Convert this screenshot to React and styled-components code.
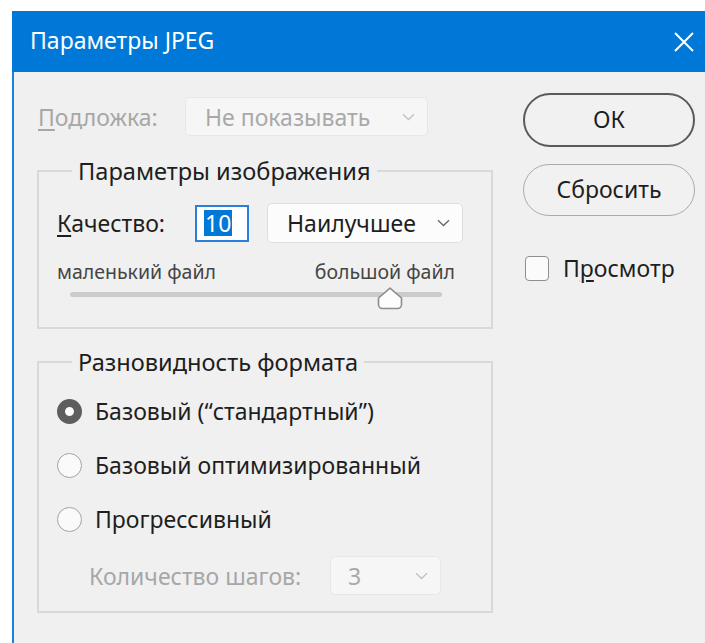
import React from "react";
import styled, { createGlobalStyle } from "styled-components";

const GlobalStyle = createGlobalStyle`
  * { box-sizing: border-box; }
  html, body {
    margin: 0;
    padding: 0;
    background: #ffffff;
  }
  body {
    font-family: "Noto Sans", "Open Sans", "DejaVu Sans", sans-serif;
    color: #1e1e1e;
  }
`;

const Page = styled.div`
  width: 705px;
  height: 643px;
  padding: 11px 0 0 12px;
  overflow: hidden;
`;

const Dialog = styled.div`
  display: flex;
  flex-direction: column;
  height: 632px;
`;

const TitleBar = styled.div`
  height: 61px;
  flex: none;
  display: flex;
  align-items: center;
  justify-content: space-between;
  padding: 0 9px 0 18px;
  background: #0078d7;
  color: #ffffff;
  font-size: 23px;
`;

const Title = styled.span`
  line-height: 1;
  padding-bottom: 2px;
`;

const CloseButton = styled.button`
  width: 24px;
  height: 24px;
  padding: 0;
  border: 0;
  background: transparent;
  display: flex;
  align-items: center;
  justify-content: center;
`;

const Body = styled.div`
  flex: 1;
  display: flex;
  gap: 30px;
  padding: 21px 10px 0 23px;
  background: #f0f0f0;
  border-left: 2px solid #1a80d9;
  font-size: 23px;
`;

const LeftColumn = styled.div`
  width: 456px;
  display: flex;
  flex-direction: column;
  padding-top: 4px;
`;

const RightColumn = styled.div`
  width: 172px;
  display: flex;
  flex-direction: column;
`;

const FieldRow = styled.div`
  display: flex;
  align-items: center;
  height: ${(p) => p.$height || 39}px;
  padding-left: ${(p) => p.$indent || 0}px;
  margin-top: ${(p) => p.$top || 0}px;
`;

const Label = styled.span`
  width: ${(p) => p.$width}px;
  flex: none;
  line-height: 30px;
  white-space: nowrap;
  color: ${(p) => (p.$disabled ? "#a7a7a7" : "#1e1e1e")};

  u {
    text-decoration-thickness: 1.5px;
    text-underline-offset: 3px;
  }
`;

const Select = styled.div`
  width: ${(p) => p.$width}px;
  height: ${(p) => p.$height || 39}px;
  flex: none;
  display: flex;
  align-items: center;
  justify-content: space-between;
  padding: 0 12px 0 ${(p) => p.$pad || 19}px;
  border: 1px solid ${(p) => (p.$disabled ? "#e7e7e7" : "#dedede")};
  border-radius: 5px;
  background: ${(p) => (p.$disabled ? "#f6f6f6" : "#fcfcfc")};
  color: ${(p) => (p.$disabled ? "#a9a9a9" : "#1e1e1e")};
  line-height: 30px;
  white-space: nowrap;
`;

const Group = styled.fieldset`
  margin: ${(p) => p.$top}px 0 0;
  padding: 17px 26px ${(p) => p.$bottom}px 18px;
  border: 2px solid #d9d9d9;
  min-width: 0;
`;

const Legend = styled.legend`
  margin-left: 15px;
  padding: 0 6px;
  font-size: 23.6px;
  line-height: 30px;
  color: #1e1e1e;
`;

const QualityInput = styled.div`
  width: 54px;
  height: 37px;
  flex: none;
  display: flex;
  align-items: center;
  padding-left: 7px;
  margin-right: 18px;
  border: 2px solid #2a7fdd;
  background: #ffffff;
`;

const Selection = styled.span`
  background: #0078d7;
  color: #ffffff;
  line-height: 26px;
  padding: 0 1px;
`;

const Scale = styled.div`
  width: 398px;
  margin-top: 17px;
`;

const ScaleLabels = styled.div`
  display: flex;
  justify-content: space-between;
  font-size: 19.5px;
  line-height: 24px;
  color: #454545;
`;

const SliderArea = styled.div`
  position: relative;
  height: 24px;
  margin: 1px 13px 0;
`;

const Track = styled.div`
  position: relative;
  top: 7px;
  height: 5px;
  border-radius: 3px;
  background: #cbcbcb;
`;

const Thumb = styled.svg`
  position: absolute;
  top: 2px;
  transform: translateX(-50%);
`;

const RadioList = styled.div`
  display: flex;
  flex-direction: column;
  gap: 20px;
`;

const RadioRow = styled.label`
  display: flex;
  align-items: center;
  gap: 13px;
  height: 34px;
  line-height: 30px;
  color: #1e1e1e;
`;

const RadioDot = styled.span`
  width: 25px;
  height: 25px;
  flex: none;
  border-radius: 50%;
  border: ${(p) => (p.$checked ? "8px solid #5e5e5e" : "1.5px solid #a3a3a3")};
  background: #fafafa;
`;

const PillButton = styled.button`
  width: 172px;
  height: ${(p) => p.$height}px;
  margin-top: ${(p) => p.$top || 0}px;
  border-radius: 28px;
  border: ${(p) => (p.$primary ? "2px solid #5a5a5a" : "1.5px solid #acacac")};
  background: #f1f1f1;
  color: #1e1e1e;
  font-family: inherit;
  font-size: 23px;
  line-height: 30px;
  padding: 0 0 2px;
`;

const CheckRow = styled.label`
  display: flex;
  align-items: center;
  gap: 14px;
  margin-top: 37px;
  padding-left: 2px;
  line-height: 30px;
  color: #1e1e1e;

  u {
    text-decoration-thickness: 1.5px;
    text-underline-offset: 3px;
  }
`;

const CheckBox = styled.span`
  width: 24px;
  height: 25px;
  flex: none;
  border: 1.5px solid #8e8e8e;
  border-radius: 4px;
  background: #fbfbfb;
`;

const Chevron = ({ color }) => (
  <svg width="13" height="8" viewBox="0 0 13 8" fill="none">
    <path d="M1 1.2 L6.5 6.5 L12 1.2" stroke={color} strokeWidth="1.3" />
  </svg>
);

const CloseIcon = () => (
  <svg width="20" height="20" viewBox="0 0 20 20" fill="none">
    <path d="M1 1 L19 19 M19 1 L1 19" stroke="#ffffff" strokeWidth="2" />
  </svg>
);

const quality = 10;
const thumbPercent = 86;

export default function App() {
  return (
    <>
      <GlobalStyle />
      <Page>
        <Dialog>
          <TitleBar>
            <Title>Параметры JPEG</Title>
            <CloseButton aria-label="Закрыть">
              <CloseIcon />
            </CloseButton>
          </TitleBar>
          <Body>
            <LeftColumn>
              <FieldRow $indent={1}>
                <Label $width={147} $disabled>
                  <u>П</u>одложка:
                </Label>
                <Select $width={243} $disabled>
                  Не показывать
                  <Chevron color="#c2c2c2" />
                </Select>
              </FieldRow>

              <Group $top={20} $bottom={18}>
                <Legend>Параметры изображения</Legend>
                <FieldRow $height={40}>
                  <Label $width={138}>
                    <u>К</u>ачество:
                  </Label>
                  <QualityInput>
                    <Selection>{quality}</Selection>
                  </QualityInput>
                  <Select $width={196} $height={40}>
                    Наилучшее
                    <Chevron color="#666666" />
                  </Select>
                </FieldRow>
                <Scale>
                  <ScaleLabels>
                    <span>маленький файл</span>
                    <span>большой файл</span>
                  </ScaleLabels>
                  <SliderArea>
                    <Track />
                    <Thumb
                      width="26"
                      height="23"
                      viewBox="0 0 26 23"
                      style={{ left: `${thumbPercent}%` }}
                    >
                      <path
                        d="M13 1.2 L24.5 11 V17.5 a4 4 0 0 1 -4 4 H5.5 a4 4 0 0 1 -4 -4 V11 Z"
                        fill="#fdfdfd"
                        stroke="#8c8c8c"
                        strokeWidth="1.6"
                        strokeLinejoin="round"
                      />
                    </Thumb>
                  </SliderArea>
                </Scale>
              </Group>

              <Group $top={18} $bottom={16}>
                <Legend>Разновидность формата</Legend>
                <RadioList>
                  <RadioRow>
                    <RadioDot $checked />
                    Базовый (“стандартный”)
                  </RadioRow>
                  <RadioRow>
                    <RadioDot />
                    Базовый оптимизированный
                  </RadioRow>
                  <RadioRow>
                    <RadioDot />
                    Прогрессивный
                  </RadioRow>
                </RadioList>
                <FieldRow $indent={32} $top={20}>
                  <Label $width={241} $disabled>
                    Количество шагов:
                  </Label>
                  <Select $width={111} $pad={17} $disabled>
                    3
                    <Chevron color="#c2c2c2" />
                  </Select>
                </FieldRow>
              </Group>
            </LeftColumn>

            <RightColumn>
              <PillButton $primary $height={54}>
                ОК
              </PillButton>
              <PillButton $top={17} $height={52}>
                Сбросить
              </PillButton>
              <CheckRow>
                <CheckBox />
                <span>
                  П<u>р</u>осмотр
                </span>
              </CheckRow>
            </RightColumn>
          </Body>
        </Dialog>
      </Page>
    </>
  );
}
